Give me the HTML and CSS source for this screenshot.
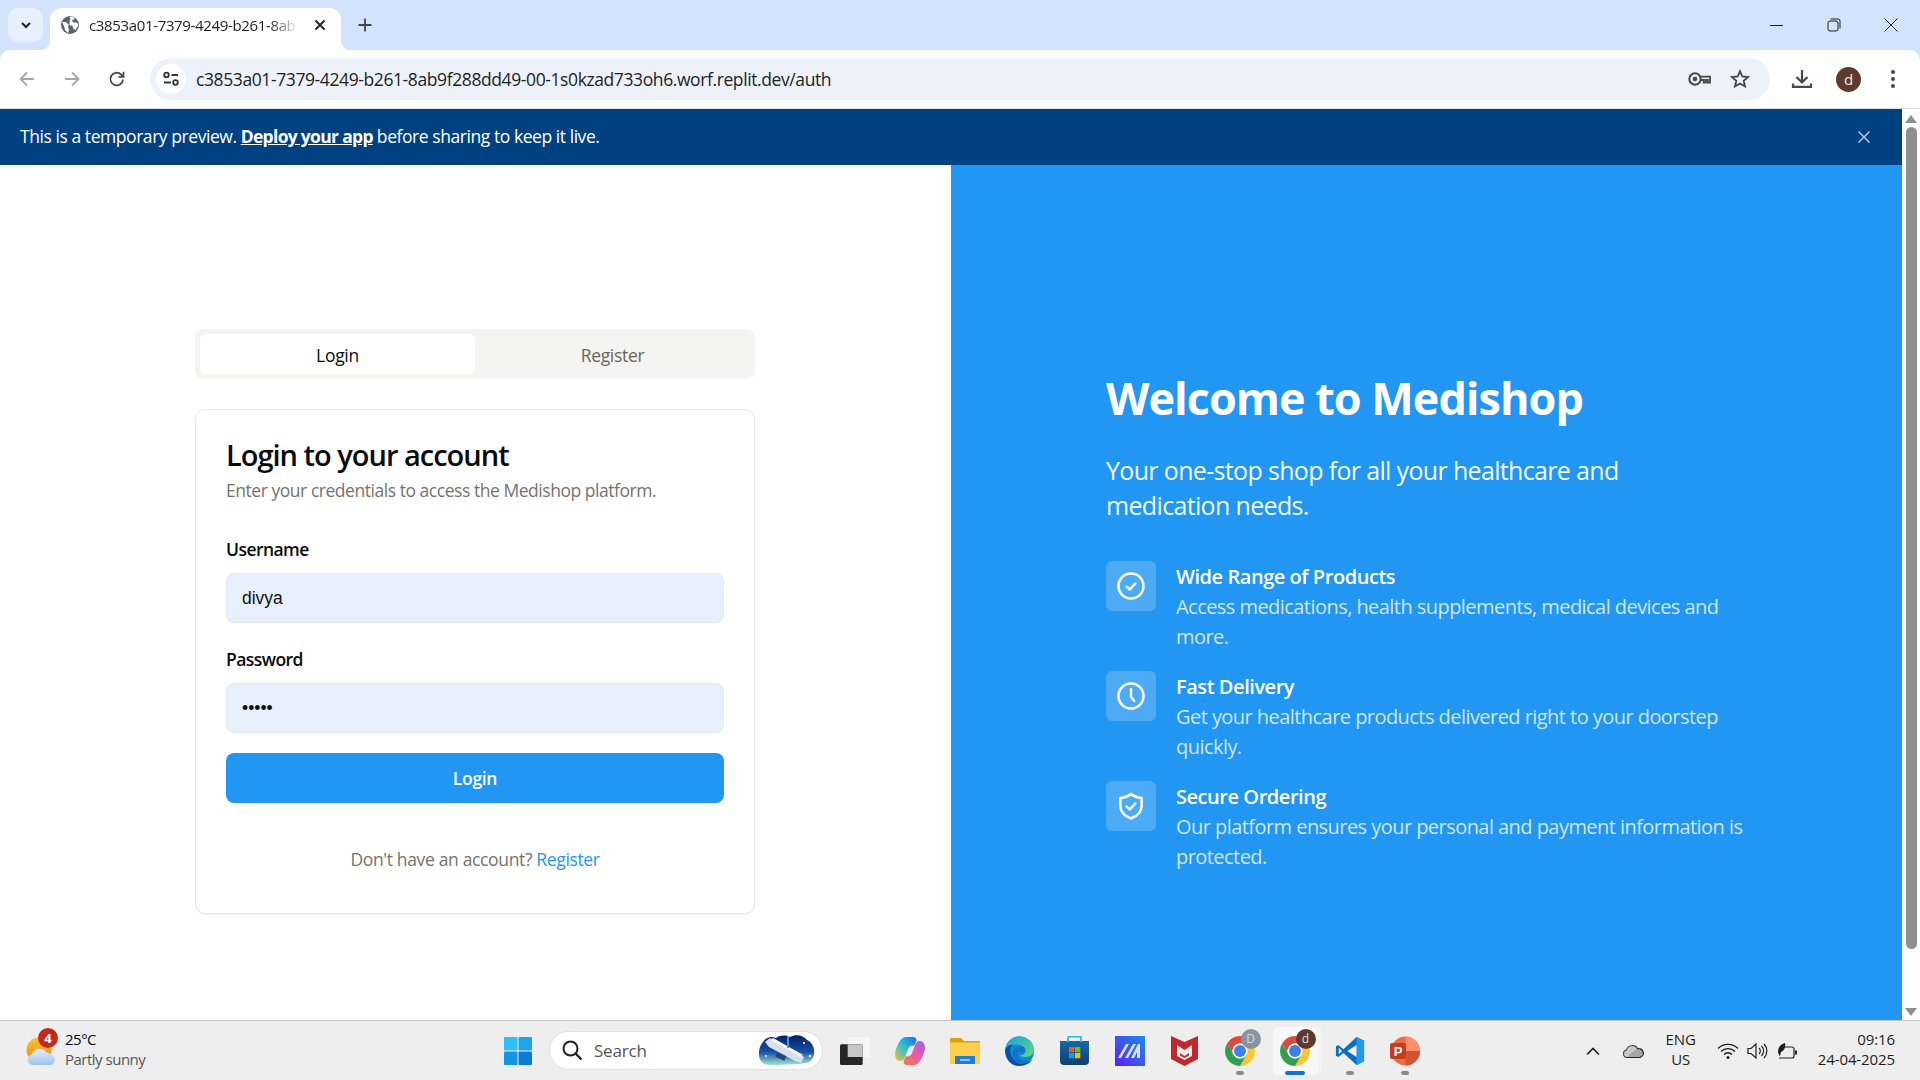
FILE: index.html
```html
<!DOCTYPE html>
<html lang="en">
<head>
<meta charset="utf-8">
<title>Medishop</title>
<link rel="stylesheet" href="styles.css">
</head>
<body>
<svg class="defs" width="0" height="0" aria-hidden="true">
  <symbol id="chrome" viewBox="0 0 48 48">
    <path fill="#db4a3c" d="M3.220 12A24 24 0 0 1 44.780 12H24A12 12 0 0 0 13.610 30Z"/>
    <path fill="#fbc531" d="M44.780 12A24 24 0 0 1 24 48L34.390 30A12 12 0 0 0 24 12Z"/>
    <path fill="#2e9e52" d="M24 48A24 24 0 0 1 3.220 12L13.610 30A12 12 0 0 0 34.390 30Z"/>
    <circle cx="24" cy="24" r="12" fill="#fff"/>
    <circle cx="24" cy="24" r="9.500" fill="#3f7fe8"/>
  </symbol>
</svg>

<header class="tabstrip">
  <button class="tab-search"><svg width="14" height="14" viewBox="0 0 14 14"><path d="M3 5l4 4 4-4" fill="none" stroke="#1f1f1f" stroke-width="2"/></svg></button>
  <div class="tab">
    <svg class="globe" width="20" height="20" viewBox="0 0 20 20"><circle cx="10" cy="10" r="9" fill="#5f6368"/><path d="M2 7l4 0 3 3-1 2 1 3-1 3-3-3-1-4zM12 1.500l3 2-3 2 1 2 4 0 1.500 2.500-3 5-2-1-1-3-3-1 0-3 1-3-1-2z" fill="#fff"/></svg>
    <span class="tab-title">c3853a01-7379-4249-b261-8ab</span>
    <svg width="14" height="14" viewBox="0 0 14 14"><path d="M2.500 2.500l9 9M11.500 2.500l-9 9" stroke="#1f1f1f" stroke-width="1.800"/></svg>
  </div>
  <svg class="newtab" width="16" height="16" viewBox="0 0 16 16"><path d="M8 1.500v13M1.500 8h13" stroke="#444" stroke-width="1.800"/></svg>
  <div class="winctl">
    <svg width="14" height="14" viewBox="0 0 14 14"><path d="M0 7.500h13" stroke="#1f1f1f" stroke-width="1"/></svg>
    <svg width="14" height="14" viewBox="0 0 14 14"><rect x="1" y="3" width="10" height="10" rx="2" fill="none" stroke="#1f1f1f"/><path d="M3.500 1h7.500a2 2 0 0 1 2 2v7.500" fill="none" stroke="#1f1f1f"/></svg>
    <svg width="14" height="14" viewBox="0 0 14 14"><path d="M.5.500l13 13M13.500.500l-13 13" stroke="#1f1f1f"/></svg>
  </div>
</header>

<nav class="toolbar">
  <div class="navs">
    <svg width="20" height="20" viewBox="0 0 20 20"><path d="M17 10H4M10 3.500L3.500 10l6.500 6.500" fill="none" stroke="#a6a6a6" stroke-width="1.800"/></svg>
    <svg width="20" height="20" viewBox="0 0 20 20"><path d="M3 10h13M10 3.500l6.500 6.500-6.500 6.500" fill="none" stroke="#a6a6a6" stroke-width="1.800"/></svg>
    <svg width="20" height="20" viewBox="0 0 20 20"><path d="M16 10.500a6.300 6.300 0 1 1-1.900-5L16 7.500M16.500 2.800v5h-5" fill="none" stroke="#474747" stroke-width="1.800"/></svg>
  </div>
  <div class="omnibox">
    <span class="site-icon"><svg width="18" height="18" viewBox="0 0 18 18"><g fill="none" stroke="#333" stroke-width="1.800"><circle cx="4.500" cy="5" r="2.300"/><path d="M9.500 5h6.500M2 12.500h7"/><circle cx="13.500" cy="12.500" r="2.300"/></g></svg></span>
    <span class="url">c3853a01-7379-4249-b261-8ab9f288dd49-00-1s0kzad733oh6.worf.replit.dev/auth</span>
    <svg class="key" width="23" height="14" viewBox="0 0 23 14"><circle cx="7" cy="7" r="5.700" fill="none" stroke="#474747" stroke-width="2"/><circle cx="7" cy="7" r="2.300" fill="#474747"/><path d="M12.500 4.700h9.500v6h-2.200V8h-2v2.700h-2V8h-3.300" fill="none" stroke="#474747" stroke-width="1.800"/></svg>
    <svg width="20" height="20" viewBox="0 0 20 20"><path d="M10 2.200l2.300 5.300 5.700.500-4.300 3.800 1.300 5.700-5-3-5 3 1.300-5.700L2 8l5.700-.5z" fill="none" stroke="#474747" stroke-width="1.800"/></svg>
  </div>
  <div class="tools">
    <svg width="22" height="22" viewBox="0 0 22 22"><path d="M11 2v12M5.500 9l5.500 5.500L16.500 9M2 15.500v3.300h18v-3.300" fill="none" stroke="#474747" stroke-width="2.200"/></svg>
    <span class="avatar">d</span>
    <svg width="6" height="20" viewBox="0 0 6 20"><circle cx="3" cy="3" r="2" fill="#474747"/><circle cx="3" cy="10" r="2" fill="#474747"/><circle cx="3" cy="17" r="2" fill="#474747"/></svg>
  </div>
</nav>

<div class="viewport">
  <div class="page">
    <div class="banner">
      <p>This is a temporary preview. <a href="#">Deploy your app</a> before sharing to keep it live.</p>
      <svg width="14" height="14" viewBox="0 0 14 14"><path d="M1.500 1.500l11 11M12.500 1.500l-11 11" stroke="#b4c8dc" stroke-width="1.500"/></svg>
    </div>
    <main class="auth">
      <section class="left">
        <div class="auth-col">
          <div class="tabs">
            <div class="tabs-item active">Login</div>
            <div class="tabs-item">Register</div>
          </div>
          <form class="card">
            <h2>Login to your account</h2>
            <p class="card-sub">Enter your credentials to access the Medishop platform.</p>
            <label class="lbl">Username</label>
            <input class="inp" type="text" value="divya">
            <label class="lbl pw">Password</label>
            <input class="inp" type="password" value="divya">
            <button type="button" class="submit">Login</button>
            <p class="alt">Don't have an account? <a href="#">Register</a></p>
          </form>
        </div>
      </section>
      <section class="right">
        <div class="hero">
          <h1>Welcome to Medishop</h1>
          <p class="lead">Your one-stop shop for all your healthcare and medication needs.</p>
          <div class="feat">
            <span class="feat-ic"><svg width="30" height="30" viewBox="0 0 24 24" fill="none" stroke="#fff" stroke-width="2" stroke-linecap="round" stroke-linejoin="round"><circle cx="12" cy="12" r="10"/><path d="M8.500 12.500l2.500 2.200 4.500-4.700"/></svg></span>
            <div class="feat-txt"><h3>Wide Range of Products</h3><p>Access medications, health supplements, medical devices and more.</p></div>
          </div>
          <div class="feat">
            <span class="feat-ic"><svg width="30" height="30" viewBox="0 0 24 24" fill="none" stroke="#fff" stroke-width="2" stroke-linecap="round" stroke-linejoin="round"><circle cx="12" cy="12" r="10"/><path d="M12 6.500v6l2.500 3.500"/></svg></span>
            <div class="feat-txt"><h3>Fast Delivery</h3><p>Get your healthcare products delivered right to your doorstep quickly.</p></div>
          </div>
          <div class="feat">
            <span class="feat-ic"><svg width="30" height="30" viewBox="0 0 24 24" fill="none" stroke="#fff" stroke-width="2" stroke-linecap="round" stroke-linejoin="round"><path d="M12 2.500c2.500 1.800 5.500 3 8.500 3v6.500c0 5-3.500 8-8.500 10-5-2-8.500-5-8.500-10V5.500c3 0 6-1.200 8.500-3z"/><path d="M8.500 12.500l2.500 2.200 4.500-4.700"/></svg></span>
            <div class="feat-txt"><h3>Secure Ordering</h3><p>Our platform ensures your personal and payment information is protected.</p></div>
          </div>
        </div>
      </section>
    </main>
  </div>
  <aside class="scrollbar">
    <span class="arrow up"></span>
    <span class="thumb"></span>
    <span class="arrow down"></span>
  </aside>
</div>

<footer class="taskbar">
  <div class="weather">
    <span class="weather-ic">
      <svg width="30" height="30" viewBox="0 0 30 30"><defs><linearGradient id="sun" x1="0" y1="0" x2="0" y2="1"><stop offset="0" stop-color="#f9c22e"/><stop offset="1" stop-color="#f08a12"/></linearGradient><linearGradient id="cloud" x1="0" y1="0" x2="0" y2="1"><stop offset="0" stop-color="#e6f0fc"/><stop offset="1" stop-color="#9dc0ee"/></linearGradient></defs><circle cx="13" cy="14" r="12.500" fill="url(#sun)"/><path d="M7 29a5.500 5.500 0 0 1-1-10.800 8 8 0 0 1 14-2.200 6.500 6.500 0 0 1 4 2 5.700 5.700 0 0 1 1 11z" fill="url(#cloud)"/></svg>
      <span class="badge">4</span>
    </span>
    <div class="weather-txt"><span class="temp">25°C</span><span class="cond">Partly sunny</span></div>
  </div>
  <div class="center">
    <span class="tb"><svg width="30" height="30" viewBox="0 0 30 30"><rect x="1" y="1" width="13.500" height="13.500" rx="1" fill="#33bdf6"/><rect x="15.500" y="1" width="13.500" height="13.500" rx="1" fill="#1ea4ec"/><rect x="1" y="15.500" width="13.500" height="13.500" rx="1" fill="#1295e4"/><rect x="15.500" y="15.500" width="13.500" height="13.500" rx="1" fill="#0a7bd6"/></svg></span>
    <div class="search">
      <svg width="22" height="22" viewBox="0 0 22 22"><circle cx="9.500" cy="9.500" r="7" fill="none" stroke="#222" stroke-width="2"/><path d="M14.500 14.500l6 6" stroke="#222" stroke-width="2.400"/></svg>
      <span>Search</span>
      <svg class="search-art" width="58" height="32" viewBox="0 0 58 32"><defs><linearGradient id="sky" x1="0" y1="0" x2="0" y2="1"><stop offset="0" stop-color="#0c1f66"/><stop offset=".55" stop-color="#1650a8"/><stop offset="1" stop-color="#a8ecc8"/></linearGradient></defs><path d="M5 8c3-5 9-6 13-4 4-3 10-3 14-1 6-3 13-2 17 3 5 2 8 8 7 14-1 5-3 8-8 9-8 2-17 1-24 2-7 1-18 1-21-4C0 23 0 13 5 8z" fill="url(#sky)"/><path d="M12 4l34 19-3 6-6-2-26-14-4-5z" fill="#d8dff0"/><path d="M14 5l30 17" stroke="#f5f7ff" stroke-width="3"/><rect x="18" y="20" width="10" height="5" fill="#26447e" transform="rotate(25 23 22)"/><path d="M30 2v12" stroke="#4f8df0" stroke-width="2"/><circle cx="46" cy="9" r="1" fill="#fff"/><circle cx="52" cy="22" r="1.200" fill="#fff"/><circle cx="8" cy="22" r="1" fill="#fff"/></svg>
    </div>
    <span class="tb"><svg width="30" height="28" viewBox="0 0 30 28"><rect x="7.700" y="0" width="22.300" height="20" rx="1" fill="#f6f6f6"/><rect x="0" y="7.300" width="22.700" height="20.700" rx="1.500" fill="#262626"/><rect x="7.700" y="7.300" width="15" height="12.700" fill="#c6c6c6"/></svg></span>
    <span class="tb"><svg width="30" height="30" viewBox="0 0 30 30"><defs><linearGradient id="cpL" x1="1" y1="0" x2="0" y2="1"><stop offset="0" stop-color="#1b6fe0"/><stop offset=".5" stop-color="#2cc0d8"/><stop offset="1" stop-color="#f4c430"/></linearGradient><linearGradient id="cpR" x1="1" y1="0" x2="0" y2="1"><stop offset="0" stop-color="#a55be8"/><stop offset=".5" stop-color="#e85ca8"/><stop offset="1" stop-color="#f4803c"/></linearGradient></defs><path d="M11 1h7c3 0 4 2 3 5l-2 4c-2-1-5 0-6 3l-3 8c-1 2-2 4-5 4C1 25-1 20 .5 15 2 9 6 1 11 1z" fill="url(#cpL)"/><path d="M19 29h-7c-3 0-4-2-3-5l2-4c2 1 5 0 6-3l3-8c1-2 2-4 5-4 4 0 6 5 4.500 10C28 21 24 29 19 29z" fill="url(#cpR)"/></svg></span>
    <span class="tb"><svg width="30" height="27" viewBox="0 0 30 27"><path d="M1 1h10l3 3h15a1 1 0 0 1 1 1v5H0V2a1 1 0 0 1 1-1z" fill="#dfa008"/><path d="M0 5.500h30v20a1.500 1.500 0 0 1-1.500 1.500h-27A1.500 1.500 0 0 1 0 25.500z" fill="#fcd04d"/><rect x="5" y="19" width="20" height="8" fill="#1c7fd4"/><path d="M10 23h10" stroke="#bde0ff" stroke-width="1.500"/></svg></span>
    <span class="tb"><svg width="31" height="30" viewBox="0 0 32 32"><defs><linearGradient id="edgeT" x1="0" y1="0" x2="1" y2="1"><stop offset="0" stop-color="#1a9fe0"/><stop offset="1" stop-color="#62dc78"/></linearGradient></defs><circle cx="16" cy="16" r="15.500" fill="#1288d8"/><path d="M1 13C3 4 10 .5 16 .5c9 0 15.500 7 15.500 14 0 5-4 8-9 8-3 0-5-1-6-2 3 0 6-1.500 6-4.500 0-4-4-7-9-7C8 9 4 11 1 13z" fill="url(#edgeT)"/><path d="M1 16c0-4 4-7 8-7-2 2-3 4-3 7 0 7 6 13 13 13 5 0 9-2 11-5-2 5-8 8-14 8C7 32 1 25 1 16z" fill="#0c4f9e"/><path d="M9 18c0-4 3-7 8-7 3 0 5 2 5 4 0 2-3 3-5 3-1-2-3-2-3 1 0 5 5 8 11 8-2 2-5 3-8 3-5-1-8-6-8-12z" fill="#0f74c8"/></svg></span>
    <span class="tb"><svg width="29" height="29" viewBox="0 0 29 29"><defs><linearGradient id="st" x1="0" y1="0" x2="0" y2="1"><stop offset="0" stop-color="#1668a8"/><stop offset="1" stop-color="#0f3f70"/></linearGradient></defs><path d="M0 5h29v20a4 4 0 0 1-4 4H4a4 4 0 0 1-4-4z" fill="url(#st)"/><path d="M8 6V2a1.500 1.500 0 0 1 1.500-1.500h10A1.500 1.500 0 0 1 21 2v4" fill="none" stroke="#22b8ee" stroke-width="1.800"/><rect x="9" y="11" width="5.300" height="5.300" fill="#ee5a24"/><rect x="15" y="11" width="5.300" height="5.300" fill="#7fba00"/><rect x="9" y="17" width="5.300" height="5.300" fill="#00a4ef"/><rect x="15" y="17" width="5.300" height="5.300" fill="#ffb900"/></svg></span>
    <span class="tb"><svg width="30" height="30" viewBox="0 0 30 30"><defs><linearGradient id="mz" x1="1" y1="0" x2="0" y2="1"><stop offset="0" stop-color="#1a8cf0"/><stop offset="1" stop-color="#5a22ee"/></linearGradient></defs><rect width="30" height="30" fill="url(#mz)"/><path d="M3 22L11 8h3L6 22zM10 22l8-14h3l-8 14zM16 22l7-14h2v14h-3v-6l-3 6z" fill="#d8e4ff"/></svg></span>
    <span class="tb"><svg width="27" height="30" viewBox="0 0 27 30"><path d="M0 0l13.500 6L27 0v23l-13.500 7L0 23z" fill="#c1272d"/><path d="M6 9l7.500 5L21 9v11l-7.500 4L6 20z" fill="#eeeeee"/><path d="M9 17l4.500 3 4.500-3v2.500L13.500 22 9 19.500z" fill="#c1272d"/></svg></span>
    <span class="tb"><span class="ic-wrap"><svg width="30" height="30"><use href="#chrome"/></svg><span class="mini grey">D</span></span><i class="dot"></i></span>
    <span class="tb current"><span class="ic-wrap"><svg width="30" height="30"><use href="#chrome"/></svg><span class="mini brown">d</span></span><i class="dash"></i></span>
    <span class="tb"><svg width="30" height="30" viewBox="0 0 32 32"><path d="M23 1L9 14 3.500 9.500 1 11v10l2.500 1.500L9 18l14 13 8-4V5z" fill="#0d6fbd"/><path d="M23 1l8 4v22l-8 4z" fill="#1f9cf0"/><path d="M23 9.500L13 16l10 6.500z" fill="#eeeeee"/><path d="M4 12.500L7.500 16 4 19.500z" fill="#eeeeee"/></svg><i class="dot"></i></span>
    <span class="tb"><svg width="30" height="30" viewBox="0 0 30 30"><circle cx="15.500" cy="15" r="14.500" fill="#ed6c47"/><path d="M15.500.500A14.500 14.500 0 0 1 30 15H15.500z" fill="#ff8f6b"/><path d="M15.500 15H30a14.500 14.500 0 0 1-14.500 14.500z" fill="#d35230"/><rect x="0" y="7" width="16" height="16" rx="2" fill="#c43e1c"/><text x="8" y="20" text-anchor="middle" font-size="13" font-weight="700" fill="#fff" font-family="Liberation Sans">P</text></svg><i class="dot"></i></span>
  </div>
  <div class="tray">
    <svg width="16" height="10" viewBox="0 0 16 10"><path d="M2 8.500l6-6 6 6" fill="none" stroke="#1f1f1f" stroke-width="1.600"/></svg>
    <svg class="onedrive" width="22" height="16" viewBox="0 0 22 16"><path d="M5 14.500a3.700 3.700 0 0 1-.500-7.300 6 6 0 0 1 11-1.500 4.500 4.500 0 0 1 2.500 8.800z" fill="#a6a6a6" stroke="#222" stroke-width="1.200"/><path d="M5 14.500a3.700 3.700 0 0 1-.500-7.300 6 6 0 0 1 11-1.500 L9 10z" fill="#eee" opacity=".5"/></svg>
    <div class="lang"><span>ENG</span><span>US</span></div>
    <svg class="sys" width="22" height="18" viewBox="0 0 22 18"><g fill="none" stroke="#1f1f1f" stroke-width="1.300"><path d="M1 6.500a14 14 0 0 1 20 0M4 9.500a10 10 0 0 1 14 0M7 12.500a5.500 5.500 0 0 1 8 0"/></g><circle cx="11" cy="15.500" r="1.500" fill="#1f1f1f"/></svg>
    <svg class="sys" width="22" height="18" viewBox="0 0 22 18"><g fill="none" stroke="#1f1f1f" stroke-width="1.200"><path d="M1 6.500h3L9 2v14l-5-4.500H1z"/><path d="M12 6a4 4 0 0 1 0 6M14.500 4a7 7 0 0 1 0 10M17 2a10 10 0 0 1 0 14"/></g></svg>
    <svg class="sys" width="22" height="18" viewBox="0 0 22 18"><path d="M5 5h10a2 2 0 0 1 2 2v7a2 2 0 0 1-2 2H2" fill="none" stroke="#1f1f1f" stroke-width="1.200"/><path d="M18 8.500h2v4h-2z" fill="#1f1f1f"/><path d="M1 10C1 5 4 2 8 1c1 4-1 8-4 9l-1 4-1-1z" fill="#1f1f1f"/></svg>
    <div class="clock"><span>09:16</span><span>24-04-2025</span></div>
  </div>
</footer>
</body>
</html>
```

FILE: styles.css
```css
* { box-sizing: border-box; }
html, body { margin: 0; height: 1080px; overflow: hidden; }
body { display: flex; flex-direction: column; font-family: "Open Sans", "Noto Sans", sans-serif; color: #0a0a0a; background: #d3e3fd; }
.defs { position: absolute; }
h1, h2, h3, p { margin: 0; }

/* browser chrome */
.tabstrip { height: 50px; flex: none; background: #d3e3fd; display: flex; align-items: flex-end; padding-left: 8px; }
.tab-search { width: 35px; height: 34px; margin-bottom: 8px; border: 0; border-radius: 10px; background: #e9f0fd; display: flex; align-items: center; justify-content: center; padding: 0; }
.tab { width: 291px; height: 42px; margin-left: 7px; background: #fff; border-radius: 12px 12px 0 0; display: flex; align-items: center; padding: 0 14px 8px 10px; position: relative; }
.tab::before, .tab::after { content: ""; position: absolute; bottom: 0; width: 10px; height: 10px; }
.tab::before { left: -10px; background: radial-gradient(circle at 0 0, transparent 10px, #fff 10.500px); }
.tab::after { right: -10px; background: radial-gradient(circle at 100% 0, transparent 10px, #fff 10.500px); }
.globe { flex: none; margin-right: 9px; }
.tab-title { flex: 1; font-size: 15px; white-space: nowrap; color: #1f1f1f; letter-spacing: -.35px; -webkit-mask-image: linear-gradient(to right, #000 86%, transparent); mask-image: linear-gradient(to right, #000 86%, transparent); margin-right: 14px; }
.newtab { margin: 0 0 17px 16px; }
.winctl { margin-left: auto; display: flex; gap: 43px; padding: 0 22px 18px 0; }

.toolbar { height: 58px; flex: none; background: #fff; border-radius: 10px 10px 0 0; display: flex; align-items: center; }
.navs { width: 150px; display: flex; gap: 25px; padding-left: 17px; align-items: center; }
.omnibox { flex: 1; height: 42px; border-radius: 21px; background: #ecf1fa; display: flex; align-items: center; padding: 0 20px 0 6px; }
.site-icon { width: 30px; height: 30px; border-radius: 50%; background: #fff; display: flex; align-items: center; justify-content: center; }
.url { flex: 1; margin-left: 10px; font-size: 17.500px; color: #1f1f1f; white-space: nowrap; letter-spacing: -.4px; }
.key { margin-right: 19px; }
.tools { width: 150px; display: flex; align-items: center; padding-left: 21px; }
.avatar { width: 25px; height: 25px; border-radius: 50%; background: #5d3a2e; color: #f2e6e0; font-size: 15px; display: flex; align-items: center; justify-content: center; margin: 0 29px 0 23px; }

/* page */
.viewport { flex: 1; min-height: 0; display: flex; border-top: 1px solid #dcdcdc; background: #fff; }
.page { flex: 1; min-width: 0; overflow: hidden; }
.banner { height: 56px; background: #004182; color: #fff; display: flex; align-items: center; justify-content: space-between; padding: 0 31px 0 20px; font-size: 17.500px; letter-spacing: -.44px; }
.banner p { padding-bottom: 2px; }
.banner a { color: #fff; font-weight: 700; letter-spacing: -.7px; }
.auth { display: flex; height: 909px; }
.left, .right { flex: none; width: 50%; display: flex; align-items: center; }
.left { justify-content: center; padding: 3px 1px 0 0; }
.auth-col { width: 560px; }
.tabs { height: 50px; background: #f4f4f2; border-radius: 8px; padding: 5px; display: flex; }
.tabs-item { flex: 1; border-radius: 5px; display: flex; align-items: center; justify-content: center; padding-top: 2px; font-size: 17.500px; font-weight: 500; color: #6b6560; letter-spacing: -.3px; }
.tabs-item.active { background: #fff; color: #0a0a0a; }
.card { margin-top: 30px; border: 1.500px solid #e6e6e6; border-radius: 10px; padding: 27.500px 30px 30px; box-shadow: 0 1px 2px rgba(0,0,0,.05); height: 505px; display: flex; flex-direction: column; }
h2 { font-size: 29px; font-weight: 600; line-height: 36px; letter-spacing: -1px; }
.card-sub { margin-top: 5px; font-size: 17.500px; line-height: 25px; color: #78716c; letter-spacing: -.46px; }
.lbl { margin-top: 33.500px; font-size: 17.500px; font-weight: 600; line-height: 25px; letter-spacing: -.55px; }
.lbl.pw { margin-top: 24px; }
.inp { margin-top: 11px; height: 50px; width: 100%; flex: none; border: 1.500px solid #e4e8f0; border-radius: 8px; background: #e8f0fe; padding: 2px 15px 0; font: 17.500px "Liberation Sans", sans-serif; color: #111; outline: none; }
.submit { margin-top: 20px; height: 50px; flex: none; border: 0; border-radius: 8px; background: #2196f3; color: #fff; font: 600 17.500px "Open Sans", sans-serif; letter-spacing: -.3px; }
.alt { margin-top: 44px; text-align: center; font-size: 17.500px; color: #78716c; letter-spacing: -.35px; }
.alt a { color: #2196f3; font-weight: 500; text-decoration: none; }

.right { background: #2196f3; color: #fff; justify-content: flex-start; padding-left: 155px; }
.hero { width: 640px; }
h1 { font-size: 45px; font-weight: 700; line-height: 60px; letter-spacing: -1px; }
.lead { margin-top: 25px; font-size: 25px; line-height: 35px; letter-spacing: -.66px; color: #f2f9ff; }
.feat { display: flex; gap: 20px; margin-top: 20px; }
.lead + .feat { margin-top: 38px; }
.feat-ic { width: 50px; height: 50px; flex: none; border-radius: 6px; background: rgba(255,255,255,.2); display: flex; align-items: center; justify-content: center; }
.feat-txt { position: relative; top: 1px; }
h3 { font-size: 20px; font-weight: 600; line-height: 30px; letter-spacing: -.45px; }
.feat p { font-size: 20px; line-height: 30px; color: #cfe7fd; letter-spacing: -.55px; }

.scrollbar { width: 18px; flex: none; background: #fff; display: flex; flex-direction: column; align-items: center; padding: 6px 0 4px; }
.arrow { width: 0; height: 0; border-left: 6.500px solid transparent; border-right: 6.500px solid transparent; flex: none; }
.arrow.up { border-bottom: 8px solid #8f8f8f; }
.arrow.down { border-top: 8px solid #8f8f8f; }
.thumb { width: 11px; height: 822px; margin: 4px 0 auto; background: #8f8f8f; border-radius: 6px; }

/* taskbar */
.taskbar { height: 60px; flex: none; background: #eeeeee; border-top: 1px solid #c4c4c4; display: flex; align-items: center; }
.weather { width: 490px; display: flex; align-items: center; padding-left: 26px; flex: none; }
.weather-ic { position: relative; width: 39px; display: flex; }
.badge { position: absolute; left: 12px; top: -8px; width: 20px; height: 20px; border-radius: 50%; background: #c42b1c; color: #fff; font-size: 13px; font-weight: 700; display: flex; align-items: center; justify-content: center; }
.weather-txt { display: flex; flex-direction: column; font-size: 15px; line-height: 20px; letter-spacing: -.5px; padding-bottom: 3px; }
.cond { color: #555; }
.center { display: flex; align-items: center; flex: none; }
.tb { width: 55px; height: 48px; display: flex; align-items: center; justify-content: center; position: relative; flex: none; }
.tb.current::before { content: ""; position: absolute; left: 6px; right: 4px; top: 0; bottom: 0; background: #f8f8f8; border-radius: 5px; box-shadow: 4px 0 0 -1px #f4f4f4; }
.tb.current > * { z-index: 1; }
.search { width: 274px; height: 39px; margin: 0 4px; background: #fff; border: 1px solid #e0e0e0; border-radius: 20px; display: flex; align-items: center; padding: 0 0 1px 11px; font-size: 17px; color: #555; letter-spacing: -.2px; }
.search span { margin-left: 11px; }
.search-art { margin-left: auto; margin-right: 6px; }
.ic-wrap { position: relative; display: flex; }
.mini { position: absolute; right: -6px; top: -7px; width: 20px; height: 20px; border-radius: 50%; font-size: 12px; display: flex; align-items: center; justify-content: center; color: #d6dce0; }
.mini.grey { background: #8596a2; }
.mini.brown { background: #5d3a2e; }
.dot { position: absolute; bottom: 0; left: 50%; margin-left: -4px; width: 8px; height: 4px; border-radius: 2px; background: #8a8a8a; }
.dash { position: absolute; bottom: 0; left: 50%; margin-left: -10px; width: 20px; height: 4px; border-radius: 2px; background: #0a78d4; }
.tray { margin-left: auto; display: flex; align-items: center; padding-right: 25px; font-size: 15px; color: #1f1f1f; }
.tray > svg { flex: none; }
.onedrive { margin: 0 20px 0 21px; }
.lang { display: flex; flex-direction: column; align-items: center; line-height: 20px; margin-right: 19px; width: 34px; padding-bottom: 3px; }
.sys + .sys { margin-left: 8px; }
.clock { display: flex; flex-direction: column; align-items: flex-end; line-height: 20px; margin-left: 19px; letter-spacing: -.1px; padding-bottom: 3px; }
```
